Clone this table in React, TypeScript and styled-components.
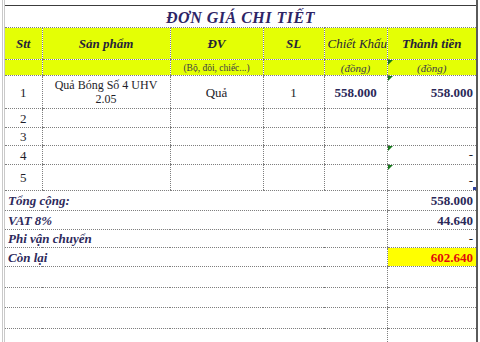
import React from 'react';
import styled, { createGlobalStyle } from 'styled-components';

const GlobalStyle = createGlobalStyle`
  html, body {
    margin: 0;
    padding: 0;
    background: #fff;
  }
  body, table, td {
    font-family: "Liberation Serif", "Times New Roman", serif;
  }
`;

const Sheet = styled.div`
  width: 480px;
  height: 342px;
  overflow: hidden;
  background: #fff;
  padding-left: 2px;
  box-sizing: border-box;
`;

const Frame = styled.div`
  width: 476px;
  height: 100%;
  box-sizing: border-box;
  padding-top: 5px;
  border-left: 3px double #c9c9c9;
  border-right: 2px solid #5a5a5a;
`;

const Grid = styled.table`
  width: 100%;
  border-collapse: collapse;
  table-layout: fixed;
  border-top: 1px solid #3c3c3c;
  font-family: "Liberation Serif", "Times New Roman", serif;
`;

const Row = styled.tr<{ $h: number }>`
  height: ${({ $h }) => $h}px;
`;

const Cell = styled.td<{
  $align?: 'left' | 'center' | 'right';
  $valign?: 'middle' | 'bottom' | 'top';
  $bg?: string;
  $first?: boolean;
}>`
  position: relative;
  padding: 0 3px;
  border: 1px dotted #7e7e7e;
  ${({ $first }) => ($first ? 'border-left: none;' : '')}
  border-right: none;
  background: ${({ $bg }) => $bg || 'transparent'};
  text-align: ${({ $align }) => $align || 'center'};
  vertical-align: ${({ $valign }) => $valign || 'middle'};
  font-family: "Liberation Serif", "Times New Roman", serif;
  font-size: 13px;
  line-height: 13px;
  white-space: nowrap;
  color: #1e1e2a;
`;

const Title = styled.div`
  font-size: 16px;
  font-weight: bold;
  font-style: italic;
  color: #2d2466;
  letter-spacing: 0.5px;
  padding-top: 1px;
`;

const HeadText = styled.span<{ $bold?: boolean }>`
  font-weight: ${({ $bold }) => ($bold === false ? 'normal' : 'bold')};
  font-style: italic;
  color: #26243a;
`;

const Hint = styled.span<{ $italic?: boolean }>`
  font-size: ${({ $italic }) => ($italic ? '11px' : '9.5px')};
  font-style: ${({ $italic }) => ($italic ? 'italic' : 'normal')};
  color: #3a3a4a;
`;

const Name = styled.span`
  font-size: 12px;
  line-height: 13px;
`;

const Money = styled.span<{ $red?: boolean }>`
  font-weight: bold;
  color: ${({ $red }) => ($red ? '#e20b0b' : '#2b2858')};
`;

const Label = styled.span`
  font-weight: bold;
  font-style: italic;
  color: #2e2a5c;
`;

const Dash = styled.span`
  display: inline-block;
  padding-bottom: 3px;
`;

const Note = styled.span`
  position: absolute;
  top: 0;
  left: 0;
  width: 0;
  height: 0;
  border-top: 5px solid #17781d;
  border-right: 5px solid transparent;
`;

const Handle = styled.span`
  position: absolute;
  right: 0;
  bottom: 0;
  width: 3px;
  height: 3px;
  background: #2d3f9c;
`;

const YELLOW = '#e4ff05';
const widths = [37, 128, 93, 61, 63, 89];

type Item = {
  stt: number;
  name?: React.ReactNode;
  unit?: string;
  qty?: string;
  discount?: string;
  total?: string;
  h: number;
  note?: boolean;
  handle?: boolean;
};

const items: Item[] = [
  { stt: 1, name: <Name>Quả Bóng Số 4 UHV<br />2.05</Name>, unit: 'Quả', qty: '1', discount: '558.000', total: '558.000', h: 33, note: true },
  { stt: 2, h: 19 },
  { stt: 3, h: 18 },
  { stt: 4, total: '-', h: 19, note: true },
  { stt: 5, total: '-', h: 26, note: true, handle: true },
];

const totals = [
  { label: 'Tổng cộng:', value: '558.000', h: 20 },
  { label: 'VAT 8%', value: '44.640', h: 19 },
  { label: 'Phi vận chuyển', value: '-', h: 18 },
  { label: 'Còn lại', value: '602.640', h: 19, highlight: true },
];

export default function App() {
  return (
    <Sheet>
      <GlobalStyle />
      <Frame>
        <Grid>
          <colgroup>
            {widths.map((w, i) => (
              <col key={i} style={{ width: w }} />
            ))}
          </colgroup>
          <tbody>
            <Row $h={22}>
              <Cell colSpan={6} $first>
                <Title>ĐƠN GIÁ CHI TIẾT</Title>
              </Cell>
            </Row>
            <Row $h={32}>
              <Cell $first $bg={YELLOW}><HeadText>Stt</HeadText></Cell>
              <Cell $bg={YELLOW}><HeadText>Sản phẩm</HeadText></Cell>
              <Cell $bg={YELLOW}><HeadText>ĐV</HeadText></Cell>
              <Cell $bg={YELLOW}><HeadText>SL</HeadText></Cell>
              <Cell $bg={YELLOW}><HeadText $bold={false}>Chiết Khấu</HeadText></Cell>
              <Cell $bg={YELLOW}><HeadText>Thành tiền</HeadText></Cell>
            </Row>
            <Row $h={14}>
              <Cell $first $bg={YELLOW} />
              <Cell $bg={YELLOW} />
              <Cell $bg={YELLOW}><Hint>(Bộ, đôi, chiếc...)</Hint></Cell>
              <Cell $bg={YELLOW} />
              <Cell $bg={YELLOW}><Hint $italic>(đồng)</Hint></Cell>
              <Cell $bg={YELLOW}><Note /><Hint $italic>(đồng)</Hint></Cell>
            </Row>
            {items.map((it) => (
              <Row key={it.stt} $h={it.h}>
                <Cell $first>{it.stt}</Cell>
                <Cell>{it.name}</Cell>
                <Cell>{it.unit}</Cell>
                <Cell>{it.qty}</Cell>
                <Cell>{it.discount && <Money>{it.discount}</Money>}</Cell>
                <Cell $align="right" $valign={it.total === '-' ? 'bottom' : 'middle'}>
                  {it.note && <Note />}
                  {it.total === '-' ? <Dash>-</Dash> : it.total && <Money>{it.total}</Money>}
                  {it.handle && <Handle />}
                </Cell>
              </Row>
            ))}
            {totals.map((t) => (
              <Row key={t.label} $h={t.h}>
                <Cell colSpan={5} $first $align="left">
                  <Label>{t.label}</Label>
                </Cell>
                <Cell $align="right" $bg={t.highlight ? '#ffff00' : undefined}>
                  {t.value === '-' ? <span>-</span> : <Money $red={t.highlight}>{t.value}</Money>}
                </Cell>
              </Row>
            ))}
            {[21, 20, 21, 20].map((h, i) => (
              <Row key={i} $h={h}>
                <Cell colSpan={5} $first />
                <Cell />
              </Row>
            ))}
          </tbody>
        </Grid>
      </Frame>
    </Sheet>
  );
}
